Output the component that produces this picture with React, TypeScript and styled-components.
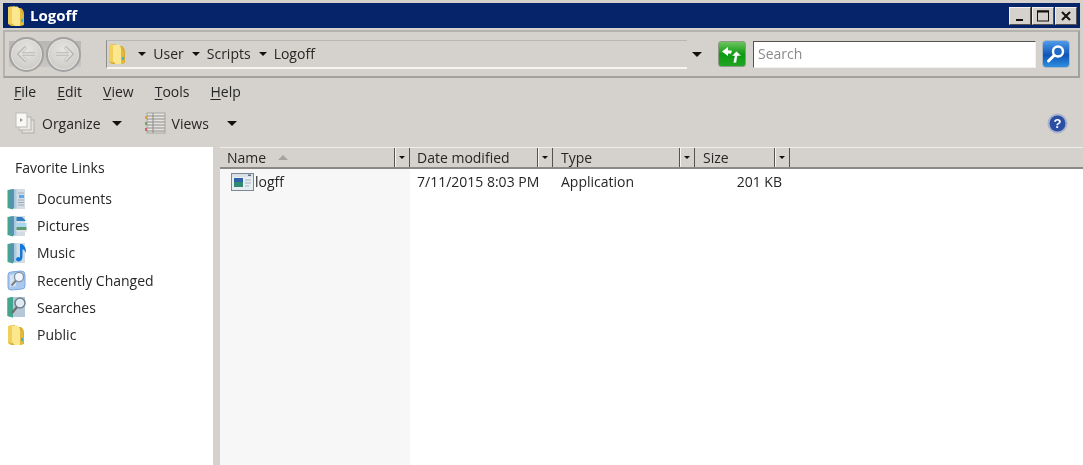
import styled, { createGlobalStyle } from "styled-components";

const GlobalStyle = createGlobalStyle`
  html, body {
    margin: 0;
    padding: 0;
    background: #d5d2cd;
    overflow: hidden;
  }
  * { box-sizing: border-box; }
`;

const Window = styled.div`
  width: 1083px;
  height: 465px;
  display: flex;
  flex-direction: column;
  background: #d5d2cd;
  font-family: "Open Sans", "Liberation Sans", sans-serif;
  font-size: 14px;
  color: #262626;
  filter: blur(0.6px);
  overflow: hidden;
`;

const TitleBar = styled.div`
  height: 25px;
  margin: 3px 3px 0;
  background: #05246a;
  display: flex;
  align-items: center;
  padding: 0 3px 0 4px;
  gap: 5px;
  color: #fff;
  font-weight: 700;
  font-size: 15px;
`;

const TitleText = styled.span`
  flex: 1;
  margin-bottom: 2px;
`;

const WinButtons = styled.div`
  display: flex;
  gap: 1px;
`;

const WinButton = styled.div`
  width: 22px;
  height: 18px;
  background: #d5d2cd;
  border: 1px solid;
  border-color: #f2f1ee #55534f #55534f #f2f1ee;
  color: #111;
  display: flex;
  align-items: center;
  justify-content: center;
`;

const AddressPanel = styled.div`
  height: 48px;
  margin: 2px 3px 0;
  border: 2px solid #a3a19d;
  border-top-color: #b5b3af;
  border-left-color: #b5b3af;
  display: flex;
  align-items: center;
  padding: 0 8px 0 4px;
`;

const NavGroup = styled.div`
  display: flex;
  align-items: center;
  justify-content: space-between;
  width: 73px;
  margin-right: 25px;
  background: linear-gradient(transparent 4px, #b9b7b3 4px, #c9c7c3 30px, transparent 30px);
`;

const NavCircle = styled.div`
  width: 35px;
  height: 35px;
  border-radius: 50%;
  border: 2px solid #a2a2a2;
  box-shadow: inset 0 0 0 1px #e4e3e0;
  background: radial-gradient(circle at 50% 35%, #e6e5e2, #cdcbc7 80%);
  display: flex;
  align-items: center;
  justify-content: center;
`;

const Crumbs = styled.div`
  width: 587px;
  height: 29px;
  display: flex;
  align-items: center;
  gap: 7px;
  border-left: 1px solid #8f8d89;
  border-top: 1px solid #b9b7b3;
  border-bottom: 2px solid #f5f4f1;
  padding-left: 1px;
`;

const Crumb = styled.span`
  margin-right: 1px;
`;

const FolderSlot = styled.span`
  display: flex;
  margin-right: 5px;
`;

const Caret = styled.span<{ $size?: number }>`
  width: 0;
  height: 0;
  border-left: ${(p) => p.$size ?? 4}px solid transparent;
  border-right: ${(p) => p.$size ?? 4}px solid transparent;
  border-top: ${(p) => p.$size ?? 4}px solid #111;
  display: inline-block;
`;

const AddressEnd = styled.div`
  width: 20px;
  display: flex;
  justify-content: center;
`;

const Refresh = styled.div`
  width: 28px;
  height: 26px;
  border-radius: 3px;
  border: 1px solid #8d9a85;
  background: linear-gradient(#6cc45f, #0f9a12 50%, #1fa522);
  display: flex;
  align-items: center;
  justify-content: center;
  margin: 0 7px 0 11px;
`;

const SearchBox = styled.div`
  width: 286px;
  height: 27px;
  background: #fff;
  border: 1px solid;
  border-color: #55534f #f2f1ee #f2f1ee #55534f;
  color: #8a8a8a;
  padding-left: 4px;
  line-height: 24px;
`;

const SearchButton = styled.div`
  width: 28px;
  height: 28px;
  margin-left: 6px;
  border-radius: 4px;
  border: 1px solid #a9b6c6;
  background: linear-gradient(#4d9be8, #0f55b8 55%, #2f8fe0);
  display: flex;
  align-items: center;
  justify-content: center;
`;

const MenuBar = styled.div`
  height: 27px;
  display: flex;
  align-items: center;
  padding-left: 14px;
  gap: 21px;
`;

const MenuItem = styled.span`
  & u { text-underline-offset: 2px; }
`;

const ToolBar = styled.div`
  height: 36px;
  display: flex;
  align-items: center;
  padding: 0 15px 0 15px;
`;

const ToolIcon = styled.span<{ $gap?: number }>`
  display: flex;
  margin-left: ${(p) => p.$gap ?? 0}px;
  margin-right: 6px;
`;

const ToolLabel = styled.span<{ $gap: number }>`
  margin-right: ${(p) => p.$gap}px;
`;

const ToolSpacer = styled.div`
  flex: 1;
`;

const Body = styled.div`
  flex: 1;
  margin-top: 6px;
  display: flex;
  min-height: 0;
`;

const Sidebar = styled.aside`
  width: 213px;
  background: #fff;
  padding: 12px 0 0 7px;
`;

const SidebarTitle = styled.div`
  padding-left: 8px;
  height: 26px;
  line-height: 17px;
`;

const LinkRow = styled.div`
  height: 27.2px;
  display: flex;
  align-items: center;
  gap: 10px;
`;

const LinkIcon = styled.span`
  width: 20px;
  display: flex;
`;

const Splitter = styled.div`
  width: 7px;
  background: #d5d2cd;
`;

const ListPane = styled.section`
  flex: 1;
  display: flex;
  flex-direction: column;
  background: #fff;
  min-width: 0;
`;

const HeaderRow = styled.div`
  height: 22px;
  background: #d5d2cd;
  border-top: 1px solid #efeeea;
  border-bottom: 2px solid #8b8986;
  display: flex;
`;

const HeaderCell = styled.div<{ $width: number; $pad: number }>`
  width: ${(p) => p.$width}px;
  padding-left: ${(p) => p.$pad}px;
  display: flex;
  align-items: center;
  position: relative;
`;

const SortArrow = styled.span`
  width: 0;
  height: 0;
  margin-left: 12px;
  border-left: 5px solid transparent;
  border-right: 5px solid transparent;
  border-bottom: 5px solid #a5a3a0;
`;

const HeaderDrop = styled.span`
  position: absolute;
  right: 0;
  top: 0;
  bottom: 0;
  width: 16px;
  border-left: 1px solid #55534f;
  border-right: 1px solid #55534f;
  box-shadow: inset 1px 0 0 #f5f4f1;
  display: flex;
  align-items: center;
  justify-content: center;
`;

const Rows = styled.div`
  flex: 1;
  display: flex;
  min-height: 0;
`;

const Column = styled.div<{ $width: number; $pad: number; $shaded?: boolean }>`
  width: ${(p) => p.$width}px;
  background: ${(p) => (p.$shaded ? "#f7f7f7" : "#fff")};
  padding: 3px 0 0 ${(p) => p.$pad}px;
  height: 100%;
  line-height: 19px;
`;

const NameCell = styled.div`
  display: flex;
  align-items: center;
  padding-left: 4px;
  gap: 1px;
  height: 19px;
`;

const SizeCell = styled.div`
  text-align: right;
  padding-right: 8px;
`;

const FolderIcon = ({ size = 22 }: { size?: number }) => (
  <svg width={(size * 18) / 22} height={size} viewBox="0 0 18 22">
    <path d="M1 2 L8 1 L8 3 L14 3 Q17 5 17 9 L17 20 L13 21 L4 21 L1 19 Z" fill="#d9ae35" />
    <path d="M1 2 L5 1.5 L5 19.5 L1 18.5 Z" fill="#f0cf5a" />
    <path d="M5 2 L10 1.5 Q13 3 13 6 L13 21 L8 21 Q6 20 5 18 Z" fill="#fbe88e" />
    <path d="M13 5 Q16 7 16 10 L16 20 L13 21 Z" fill="#e2b93c" />
    <rect x="14" y="14" width="2" height="3" fill="#45b0cc" />
  </svg>
);

const ArrowIcon = ({ flip }: { flip?: boolean }) => (
  <svg width="22" height="18" viewBox="0 0 22 18" style={flip ? { transform: "scaleX(-1)" } : undefined}>
    <path d="M10 2 L3 9 L10 16 M3 9 L19 9" fill="none" stroke="#b9b8b4" strokeWidth="3.4" />
    <path d="M10 2.6 L3.8 9 L10 15.4 M3.8 9 L19 9" fill="none" stroke="#e2e1de" strokeWidth="1.6" />
  </svg>
);

const BookIcon = ({ accent }: { accent: "doc" | "pic" | "music" | "search" }) => (
  <svg width="20" height="22" viewBox="0 0 20 22">
    <rect x="6" y="1" width="12" height="20" fill="#d3dce4" />
    <path d="M0.5 2 L6 1 L6 21.5 L0.5 20 Z" fill="#43a58c" />
    <path d="M3.5 2 L7 1.2 L7 20.5 L3.5 19.5 Z" fill="#5a90b8" />
    <path d="M7 1 L9.5 1.5 L9.5 20 L7 20.8 Z" fill="#a9cbe0" />
    {accent === "doc" && (
      <>
        <path d="M11 5 H17 M11 12 H17 M11 14.5 H17 M11 17 H17" stroke="#a0acb7" strokeWidth="1" />
        <rect x="12" y="7" width="5" height="3" fill="#5aa8e8" />
      </>
    )}
    {accent === "pic" && (
      <>
        <path d="M9.5 2 L15 2 L19 6 L9.5 6 Z" fill="#2f7fc4" />
        <rect x="9.5" y="8" width="10" height="4" fill="#a8d8f0" />
        <rect x="9.5" y="12" width="10" height="3" fill="#5f9a72" />
        <rect x="9.5" y="15" width="10" height="2" fill="#dfe4e8" />
      </>
    )}
    {accent === "music" && (
      <path d="M13 2 L13 15.5 Q11 14.5 9.5 16 Q8 18.5 11 19.5 Q15 19.5 15.5 15 L15.5 7 Q18 8 19 11 Q19.5 5 15 2 Z" fill="#1478d8" />
    )}
    {accent === "search" && (
      <>
        <rect x="6" y="1" width="12" height="20" fill="#b4c8d8" />
        <path d="M0.5 2 L6 1 L6 21.5 L0.5 20 Z" fill="#43a58c" />
        <circle cx="13" cy="7" r="5" fill="#dfeaf4" stroke="#707e8a" strokeWidth="1.5" />
        <path d="M10 11 L5 17" stroke="#6d6d6d" strokeWidth="2.2" />
      </>
    )}
  </svg>
);

const RecentIcon = () => (
  <svg width="20" height="22" viewBox="0 0 20 22">
    <path d="M1 6 Q1 3 4 3 L14 2 Q18 2 18 6 L18 17 Q18 20 15 20 L4 21 Q1 21 1 18 Z" fill="#a8c8ee" stroke="#7ea8e0" />
    <path d="M3 6 L9 5 L9 17 L3 18 Z" fill="#d3e3f6" />
    <circle cx="12" cy="8" r="4.6" fill="#eef5fb" stroke="#87949f" strokeWidth="1.4" />
    <path d="M9 11.5 L4.5 16.5" stroke="#808080" strokeWidth="2" />
  </svg>
);

const AppIcon = () => (
  <svg width="23" height="18" viewBox="0 0 23 18">
    <rect x="0.5" y="0.5" width="22" height="17" fill="#e8edf2" stroke="#7b8793" />
    <rect x="1" y="1" width="21" height="3" fill="#d8dfe5" />
    <rect x="3" y="5" width="9" height="9" fill="#2f8a70" />
    <rect x="3" y="5" width="9" height="4" fill="#2d62a8" />
    <path d="M14 7 H20 M14 10 H20 M14 13 H18" stroke="#a5b3c0" />
    <rect x="17" y="1.5" width="3" height="1.5" fill="#5e6f80" />
  </svg>
);

const OrganizeIcon = () => (
  <svg width="21" height="23" viewBox="0 0 21 23">
    <rect x="7" y="8" width="12" height="13" fill="#e4e2de" stroke="#b0aeaa" />
    <rect x="4" y="5" width="12" height="13" fill="#ecebe7" stroke="#b5b3af" />
    <rect x="1" y="1" width="11" height="14" fill="#f8f8f6" stroke="#bdbbb7" />
    <path d="M5 6 L8 8 L5 10" fill="#9a9a9a" />
  </svg>
);

const ViewsIcon = () => (
  <svg width="21" height="22" viewBox="0 0 21 22">
    <rect x="2" y="1" width="18" height="20" fill="#e4e3e0" stroke="#a5a3a0" />
    <path d="M2 4 H20 M2 7 H20 M2 10 H20 M2 13 H20 M2 16 H20 M2 19 H20 M8 1 V21" stroke="#8f8d8a" />
    <rect x="0" y="4" width="2" height="3" fill="#e0a040" />
    <rect x="0" y="10" width="2" height="3" fill="#6aa86a" />
    <rect x="0" y="16" width="2" height="3" fill="#d06a6a" />
  </svg>
);

const RefreshGlyph = () => (
  <svg width="24" height="21" viewBox="0 0 24 21">
    <path d="M8 3 L2 7.5 L8 12 L8 9.5 L11 9.8 L12 6.8 L8 6.2 Z" fill="#fff" />
    <path d="M16.5 7 L11.5 12 L14.5 12 L13 19 L16.5 19 L17.5 12 L21.5 12 Z" fill="#fff" stroke="#0c8c10" strokeWidth="0.6" />
  </svg>
);

const MagnifierGlyph = () => (
  <svg width="22" height="22" viewBox="0 0 22 22">
    <circle cx="13" cy="8.5" r="5" fill="#1f6cc8" stroke="#fff" strokeWidth="2.4" />
    <path d="M9 12.5 L3.5 18" stroke="#fff" strokeWidth="3" strokeLinecap="round" />
  </svg>
);

const HelpIcon = () => (
  <svg width="21" height="21" viewBox="0 0 21 21">
    <circle cx="10.5" cy="10.5" r="10" fill="#a9b4cc" />
    <circle cx="10.5" cy="10.5" r="8" fill="#2c4fa3" />
    <text x="10.5" y="15" textAnchor="middle" fontSize="13" fontWeight="700" fill="#fff" fontFamily="Liberation Sans, sans-serif">?</text>
  </svg>
);

const MinimizeGlyph = () => (
  <svg width="12" height="12" viewBox="0 0 12 12"><rect x="2" y="9" width="7" height="2" fill="#111" /></svg>
);
const MaximizeGlyph = () => (
  <svg width="14" height="14" viewBox="0 0 14 14"><rect x="1.5" y="2" width="11" height="10" fill="none" stroke="#111" strokeWidth="1" /><rect x="1" y="1.5" width="12" height="2" fill="#111" /></svg>
);
const CloseGlyph = () => (
  <svg width="12" height="12" viewBox="0 0 12 12"><path d="M2 2 L10 10 M10 2 L2 10" stroke="#111" strokeWidth="2" /></svg>
);

const links = [
  { label: "Documents", icon: <BookIcon accent="doc" /> },
  { label: "Pictures", icon: <BookIcon accent="pic" /> },
  { label: "Music", icon: <BookIcon accent="music" /> },
  { label: "Recently Changed", icon: <RecentIcon /> },
  { label: "Searches", icon: <BookIcon accent="search" /> },
  { label: "Public", icon: <FolderIcon /> },
];

const columns = [
  { label: "Name", width: 190, pad: 7, sorted: true },
  { label: "Date modified", width: 143, pad: 7 },
  { label: "Type", width: 142, pad: 8 },
  { label: "Size", width: 95, pad: 8 },
];

export default function App() {
  return (
    <Window>
      <GlobalStyle />
      <TitleBar>
        <FolderIcon />
        <TitleText>Logoff</TitleText>
        <WinButtons>
          <WinButton><MinimizeGlyph /></WinButton>
          <WinButton><MaximizeGlyph /></WinButton>
          <WinButton><CloseGlyph /></WinButton>
        </WinButtons>
      </TitleBar>
      <AddressPanel>
        <NavGroup>
          <NavCircle><ArrowIcon /></NavCircle>
          <NavCircle><ArrowIcon flip /></NavCircle>
        </NavGroup>
        <Crumbs>
          <FolderSlot><FolderIcon /></FolderSlot>
          <Caret />
          <Crumb>User</Crumb>
          <Caret />
          <Crumb>Scripts</Crumb>
          <Caret />
          <Crumb>Logoff</Crumb>
        </Crumbs>
        <AddressEnd><Caret $size={5} /></AddressEnd>
        <Refresh><RefreshGlyph /></Refresh>
        <SearchBox>Search</SearchBox>
        <SearchButton><MagnifierGlyph /></SearchButton>
      </AddressPanel>
      <MenuBar>
        <MenuItem><u>F</u>ile</MenuItem>
        <MenuItem><u>E</u>dit</MenuItem>
        <MenuItem><u>V</u>iew</MenuItem>
        <MenuItem><u>T</u>ools</MenuItem>
        <MenuItem><u>H</u>elp</MenuItem>
      </MenuBar>
      <ToolBar>
        <ToolIcon><OrganizeIcon /></ToolIcon>
        <ToolLabel $gap={11}>Organize</ToolLabel>
        <Caret $size={5} />
        <ToolIcon $gap={23}><ViewsIcon /></ToolIcon>
        <ToolLabel $gap={18}>Views</ToolLabel>
        <Caret $size={5} />
        <ToolSpacer />
        <HelpIcon />
      </ToolBar>
      <Body>
        <Sidebar>
          <SidebarTitle>Favorite Links</SidebarTitle>
          {links.map((link) => (
            <LinkRow key={link.label}>
              <LinkIcon>{link.icon}</LinkIcon>
              <span>{link.label}</span>
            </LinkRow>
          ))}
        </Sidebar>
        <Splitter />
        <ListPane>
          <HeaderRow>
            {columns.map((col) => (
              <HeaderCell key={col.label} $width={col.width} $pad={col.pad}>
                {col.label}
                {col.sorted && <SortArrow />}
                <HeaderDrop><Caret $size={3} /></HeaderDrop>
              </HeaderCell>
            ))}
          </HeaderRow>
          <Rows>
            <Column $width={190} $pad={7} $shaded>
              <NameCell><AppIcon /><span>logff</span></NameCell>
            </Column>
            <Column $width={143} $pad={7}>7/11/2015 8:03 PM</Column>
            <Column $width={142} $pad={8}>Application</Column>
            <Column $width={95} $pad={8}><SizeCell>201 KB</SizeCell></Column>
          </Rows>
        </ListPane>
      </Body>
    </Window>
  );
}
